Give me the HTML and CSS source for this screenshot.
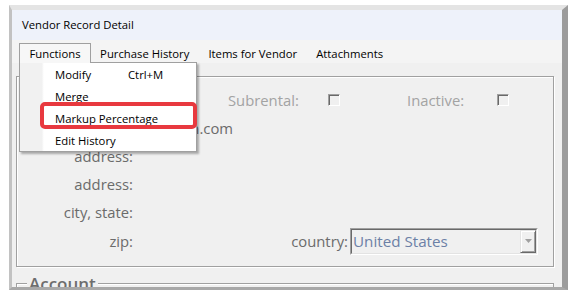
FILE: index.html
```html
<!DOCTYPE html>
<html>
<head>
<meta charset="utf-8">
<link rel="stylesheet" href="styles.css">
</head>
<body>
<div class="frame">
  <div class="titlebar">Vendor Record Detail</div>
  <div class="menubar">
    <span class="mitem active">Functions</span>
    <span class="mitem">Purchase History</span>
    <span class="mitem">Items for Vendor</span>
    <span class="mitem">Attachments</span>
  </div>
  <div class="content">
    <div class="group">
      <div class="row">
        <span class="lbl"></span>
        <span class="gap1"></span>
        <span class="dis sub">Subrental:</span>
        <span class="chk"></span>
        <span class="dis ina">Inactive:</span>
        <span class="chk"></span>
      </div>
      <div class="row">
        <span class="lbl"></span>
        <span class="val">kingston.com</span>
      </div>
      <div class="row">
        <span class="lbl">address:</span>
      </div>
      <div class="row">
        <span class="lbl">address:</span>
      </div>
      <div class="row tall">
        <span class="lbl">city, state:</span>
      </div>
      <div class="row">
        <span class="lbl">zip:</span>
        <div class="country">
          <span class="clbl">country:</span>
          <div class="dd">
            <div class="dd-in">
              <span class="dd-text">United States</span>
              <span class="dd-btn">
                <svg width="7" height="4" viewBox="0 0 7 4"><path d="M0 0H7L3.5 4Z" fill="#a0a0a0"/></svg>
              </span>
            </div>
          </div>
        </div>
      </div>
    </div>
    <div class="group2">
      <span class="legend">Account</span>
    </div>
  </div>
  <div class="menu">
    <div class="mrow"><span class="t">Modify</span><span>Ctrl+M</span></div>
    <div class="mrow"><span class="t">Merge</span></div>
    <div class="mrow"><span class="t">Markup Percentage</span></div>
    <div class="mrow"><span class="t">Edit History</span></div>
  </div>
  <div class="annot"></div>
</div>
</body>
</html>
```

FILE: styles.css
```css
* { box-sizing: border-box; }
html, body { margin: 0; padding: 0; background: #fff; }
body {
  width: 574px;
  height: 294px;
  overflow: hidden;
  font-family: "Open Sans", "Noto Sans", sans-serif;
}
.frame {
  position: relative;
  width: 559px;
  height: 285px;
  margin: 5px 0 0 9px;
  border-style: solid;
  border-width: 5px 6px 3px 3px;
  border-color: #e4e4e4 #9c9c9c #a8a8a8 #c2c2c2;
  overflow: hidden;
  background: #f0f0f0;
}
.titlebar {
  height: 30px;
  line-height: 30px;
  padding-left: 10px;
  background: #eef2fa;
  font-size: 11.3px;
  color: #000;
}
.menubar {
  height: 23px;
  padding: 3px 0 0 7px;
  background: #f4f4f4;
  display: flex;
  font-size: 11.3px;
}
.mitem {
  height: 20px;
  line-height: 19px;
  padding: 0 8.5px;
  border: 1px solid transparent;
  border-bottom: 0;
  color: #000;
  white-space: nowrap;
}
.mitem.active {
  position: relative;
  z-index: 3;
  padding: 0 9px 0 9.5px;
  background: #f7f7f7;
  border-color: #a0a0a0;
}
.content {
  height: 224px;
  padding: 13px 8px 0 4px;
  background: #f0f0f0;
}
.group {
  height: 191px;
  border: 1px solid #a0a0a0;
  box-shadow: 1px 1px 0 #fff, inset 1px 1px 0 #fff;
  padding: 9px 15px 0 0;
}
.row {
  display: flex;
  align-items: center;
  height: 28px;
  line-height: 28px;
  font-size: 14.8px;
  color: #6b6b6b;
  white-space: nowrap;
}
.row.tall { height: 29px; line-height: 29px; }
.lbl { width: 116px; flex: none; text-align: right; }
.gap1 { width: 95px; flex: none; }
.dis { color: #a3a3a3; flex: none; }
.sub { width: 100px; }
.ina { width: 90px; margin-left: 67px; }
.chk {
  width: 12px;
  height: 12px;
  flex: none;
  border: 1px solid;
  border-color: #a0a0a0 #fff #fff #a0a0a0;
  box-shadow: inset 1px 1px 0 #696969;
  background: #f0f0f0;
}
.val {
  margin-left: 4px;
  width: 96px;
  display: flex;
  justify-content: flex-end;
}
.country {
  margin-left: auto;
  display: flex;
  align-items: center;
}
.dd {
  margin-left: 2px;
  width: 188px;
  height: 27px;
  border: 1px solid;
  border-color: #a0a0a0 #fff #fff #a0a0a0;
}
.dd-in {
  height: 100%;
  display: flex;
  border: 1px solid;
  border-color: #696969 #e3e3e3 #e3e3e3 #696969;
  background: #f0f0f0;
}
.dd-text {
  flex: 1;
  padding-left: 1px;
  line-height: 22px;
  font-size: 15.2px;
  color: #6c80a6;
}
.dd-btn {
  width: 16px;
  display: flex;
  align-items: center;
  justify-content: center;
  border: 1px solid;
  border-color: #e3e3e3 #696969 #696969 #e3e3e3;
  box-shadow: inset 1px 1px 0 #fff, inset -1px -1px 0 #a0a0a0;
  background: #f0f0f0;
}
.dd-btn svg { display: block; }
.group2 {
  margin-top: 16px;
  height: 40px;
  border: 1px solid #a0a0a0;
  box-shadow: inset 1px 1px 0 #fff;
  display: flex;
  align-items: flex-start;
}
.legend {
  margin: -10px 0 0 10px;
  padding: 0 2px;
  background: #f0f0f0;
  font-size: 17px;
  font-weight: 600;
  line-height: 20px;
  color: #6d6d6d;
}
.menu {
  position: absolute;
  left: 7px;
  top: 52px;
  width: 178px;
  height: 90px;
  z-index: 2;
  border: 1px solid #a0a0a0;
  background: linear-gradient(to right, #f1f1f1 0, #f1f1f1 22px, #fafafa 23px, #fff 24px);
  box-shadow: 2px 2px 2px rgba(0, 0, 0, 0.3);
  padding-top: 1px;
  font-size: 11.3px;
  color: #000;
}
.mrow {
  display: flex;
  height: 22px;
  line-height: 22px;
  padding-left: 35px;
  white-space: nowrap;
}
.mrow .t { width: 73px; flex: none; }
.annot {
  position: absolute;
  left: 28px;
  top: 92px;
  width: 157px;
  height: 27px;
  border: 4px solid #e8393f;
  border-radius: 5px;
  z-index: 4;
}
```
